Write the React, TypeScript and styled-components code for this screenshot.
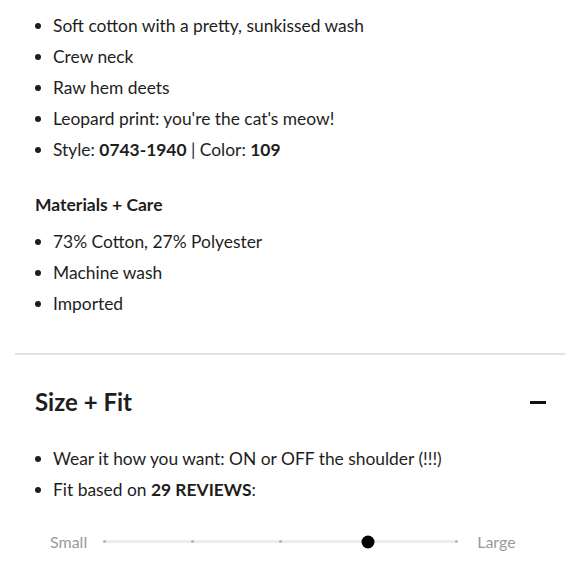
import React from 'react';
import styled, { createGlobalStyle } from 'styled-components';

const GlobalStyle = createGlobalStyle`
  body {
    margin: 0;
    background: #fff;
    font-family: Lato, 'Noto Sans', sans-serif;
    color: #1e1e1e;
  }
`;

const Page = styled.div`
  width: 580px;
  padding: 10px 15px 0;
  box-sizing: border-box;
`;

const Section = styled.div`
  padding: 0 20px;
`;

const List = styled.ul`
  list-style: none;
  margin: 0;
  padding: 0;
`;

const Item = styled.li`
  position: relative;
  padding-left: 18px;
  font-size: 17.4px;
  line-height: 31px;

  &::before {
    content: '';
    position: absolute;
    left: 0;
    top: 13px;
    width: 6px;
    height: 6px;
    border-radius: 50%;
    background: #1e1e1e;
  }

  b {
    font-weight: 700;
  }
`;

const SubHeading = styled.h3`
  margin: 28px 0 9px;
  font-size: 17.5px;
  line-height: 24px;
  font-weight: 700;
`;

const Divider = styled.hr`
  border: 0;
  border-top: 2px solid #e2e2e2;
  margin: 34px 0 0;
`;

const AccordionHeader = styled.div`
  display: flex;
  justify-content: space-between;
  align-items: center;
  padding: 34px 19px 0 20px;
  height: 26px;
`;

const Title = styled.h2`
  margin: 0;
  font-size: 24px;
  font-weight: 700;
  line-height: 26px;
`;

const Minus = styled.span`
  width: 16px;
  height: 3px;
  background: #111;
`;

const FitBody = styled.div`
  padding: 28px 20px 0;
`;

const Scale = styled.div`
  display: flex;
  align-items: center;
  margin-top: 27px;
  padding-left: 15px;
`;

const ScaleLabel = styled.span`
  font-size: 16px;
  color: #9a9a9a;
`;

const Track = styled.div`
  position: relative;
  width: 352px;
  height: 3px;
  margin: 0 21px 0 17px;
  background: #ececec;
`;

const Tick = styled.span<{ $at: number }>`
  position: absolute;
  top: 0;
  left: ${p => p.$at}%;
  width: 3px;
  height: 3px;
  margin-left: -1.5px;
  border-radius: 50%;
  background: #b5b5b5;
`;

const Knob = styled.span<{ $at: number }>`
  position: absolute;
  top: 50%;
  left: ${p => p.$at}%;
  width: 13px;
  height: 13px;
  transform: translate(-50%, -50%);
  border-radius: 50%;
  background: #000;
`;

const ticks = [0, 25, 50, 100];

export default function App() {
  return (
    <Page>
      <GlobalStyle />
      <Section>
        <List>
          <Item>Soft cotton with a pretty, sunkissed wash</Item>
          <Item>Crew neck</Item>
          <Item>Raw hem deets</Item>
          <Item>Leopard print: you're the cat's meow!</Item>
          <Item>
            Style: <b>0743-1940</b> | Color: <b>109</b>
          </Item>
        </List>
        <SubHeading>Materials + Care</SubHeading>
        <List>
          <Item>73% Cotton, 27% Polyester</Item>
          <Item>Machine wash</Item>
          <Item>Imported</Item>
        </List>
      </Section>
      <Divider />
      <AccordionHeader>
        <Title>Size + Fit</Title>
        <Minus />
      </AccordionHeader>
      <FitBody>
        <List>
          <Item>Wear it how you want: ON or OFF the shoulder (!!!)</Item>
          <Item>
            Fit based on <b>29 REVIEWS</b>:
          </Item>
        </List>
        <Scale>
          <ScaleLabel>Small</ScaleLabel>
          <Track>
            {ticks.map(t => (
              <Tick key={t} $at={t} />
            ))}
            <Knob $at={75} />
          </Track>
          <ScaleLabel>Large</ScaleLabel>
        </Scale>
      </FitBody>
    </Page>
  );
}
